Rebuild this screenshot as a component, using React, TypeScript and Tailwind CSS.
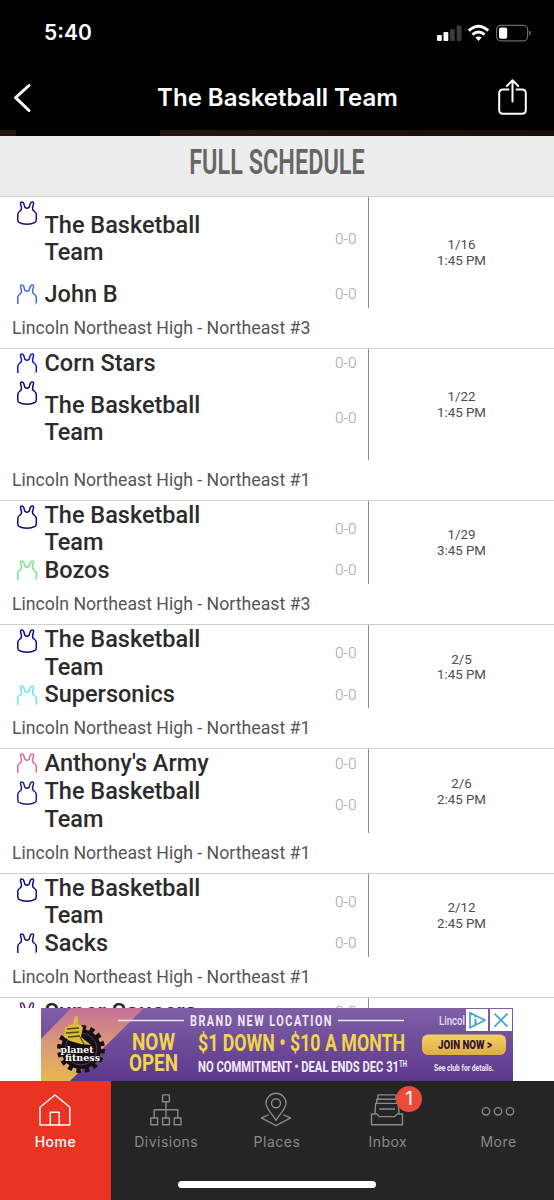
import type { ReactNode } from 'react';
import { clsx } from 'clsx';

interface Team {
  name: string;
  jersey: string;
  lines: number;
  wraps?: boolean;
}

interface Game {
  teams: Team[];
  date: string;
  time: string;
  venue: string;
}

const US = 'The Basketball Team';

const games: Game[] = [
  {
    teams: [
      { name: US, jersey: '#2a0a6e', lines: 3, wraps: true },
      { name: 'John B', jersey: '#4169d8', lines: 1 },
    ],
    date: '1/16',
    time: '1:45 PM',
    venue: 'Lincoln Northeast High - Northeast #3',
  },
  {
    teams: [
      { name: 'Corn Stars', jersey: '#1414d2', lines: 1 },
      { name: US, jersey: '#0a0a78', lines: 3, wraps: true },
    ],
    date: '1/22',
    time: '1:45 PM',
    venue: 'Lincoln Northeast High - Northeast #1',
  },
  {
    teams: [
      { name: US, jersey: '#0a0a86', lines: 2, wraps: true },
      { name: 'Bozos', jersey: '#74e884', lines: 1 },
    ],
    date: '1/29',
    time: '3:45 PM',
    venue: 'Lincoln Northeast High - Northeast #3',
  },
  {
    teams: [
      { name: US, jersey: '#0a0a86', lines: 2, wraps: true },
      { name: 'Supersonics', jersey: '#66e9ee', lines: 1 },
    ],
    date: '2/5',
    time: '1:45 PM',
    venue: 'Lincoln Northeast High - Northeast #1',
  },
  {
    teams: [
      { name: "Anthony's Army", jersey: '#e3668c', lines: 1 },
      { name: US, jersey: '#20208c', lines: 2, wraps: true },
    ],
    date: '2/6',
    time: '2:45 PM',
    venue: 'Lincoln Northeast High - Northeast #1',
  },
  {
    teams: [
      { name: US, jersey: '#0a0a78', lines: 2, wraps: true },
      { name: 'Sacks', jersey: '#14147a', lines: 1 },
    ],
    date: '2/12',
    time: '2:45 PM',
    venue: 'Lincoln Northeast High - Northeast #1',
  },
  {
    teams: [
      { name: 'Super Saucers', jersey: '#6b1a80', lines: 1 },
      { name: US, jersey: '#0a0a78', lines: 2, wraps: true },
    ],
    date: '2/19',
    time: '2:45 PM',
    venue: 'Lincoln Northeast High - Northeast #1',
  },
];

const LINE = 27.7;

function Jersey({ color, open }: { color: string; open: boolean }) {
  return (
    <svg width="24" height="28" viewBox="0 0 24 28" fill="none" stroke={color} strokeWidth="1.5" strokeLinejoin="round">
      {open ? (
        <>
          <path d="M2.8 24V17Q3 15.4 5 14Q6.9 12.8 6.5 10.5L5.4 6.4Q5.4 4.9 6.9 4.9Q8.2 4.9 8.7 6.6L10 10.4Q12 12 14 10.4L15.3 6.6Q16 4.9 17.2 4.9Q18.7 4.9 18.6 6.4L17.6 10.5Q17.1 12.8 19 14Q21 15.4 21.3 17V23.3" />
          <path d="M21.3 22.8Q20.8 24.3 19 24.9" strokeWidth="0.7" opacity="0.5" />
        </>
      ) : (
        <path d="M4 25.4Q2.8 24.6 2.8 22.5V17Q3 15.4 5 14Q6.9 12.8 6.5 10.5L5.4 6.4Q5.4 4.9 6.9 4.9Q8.2 4.9 8.7 6.6L10 10.4Q12 12 14 10.4L15.3 6.6Q16 4.9 17.2 4.9Q18.7 4.9 18.6 6.4L17.6 10.5Q17.1 12.8 19 14Q21 15.4 21.3 17V22.5Q21.2 24.6 20 25.4Q17 27.2 12 27.2Q7 27.2 4 25.4Z" />
      )}
    </svg>
  );
}

function GameRow({ game }: { game: Game }) {
  return (
    <div className="shrink-0 border-t border-[#cfcfcf] pb-[10.2px]">
      <div className="flex">
        <div className="w-[369px] border-r border-[#8c8c8c]">
          {game.teams.map((team) => (
            <div key={team.name} className="flex pl-[15px]" style={{ height: team.lines * LINE }}>
              <div className="w-[29.5px] shrink-0">
                <Jersey color={team.jersey} open={!team.wraps} />
              </div>
              <div className="flex w-[180px] items-center pt-[1.6px] text-[23.5px] leading-[27.5px] font-medium text-[#2c2c2c]">
                {team.name}
              </div>
              <div className="flex flex-1 items-center justify-end pt-[1.6px] pr-[11.5px] text-[15.4px] font-light text-[#a3a3a3]">0-0</div>
            </div>
          ))}
        </div>
        <div className="flex flex-1 flex-col items-center justify-center pt-px text-[13.3px] leading-[15.6px] text-[#4d4d4d]">
          <span>{game.date}</span>
          <span>{game.time}</span>
        </div>
      </div>
      <div className="pt-[10px] pl-3 text-[17.7px] leading-5 text-[#555]">{game.venue}</div>
    </div>
  );
}

function StatusBar() {
  return (
    <div className="flex h-[66px] items-center justify-between pr-[23px] pl-[44px]">
      <span className="text-[21px] font-semibold">5:40</span>
      <svg width="95" height="20" viewBox="0 0 95 20" fill="white">
        <rect x="1" y="12" width="4.8" height="6" rx="1" />
        <rect x="7.5" y="9" width="4.8" height="9" rx="1" />
        <rect x="14" y="6" width="4.8" height="12" rx="1" fill="#3a3a3a" />
        <rect x="20.7" y="2.5" width="4.8" height="15.5" rx="1" fill="#3a3a3a" />
        <g fill="none" stroke="white" strokeWidth="2.9">
          <path d="M32.8 7.6Q42.5 -1 52.2 7.6" />
          <path d="M36.4 11.7Q42.5 6.3 48.6 11.7" />
        </g>
        <path d="M39.3 14.6Q42.5 12.2 45.7 14.6L42.5 18Z" />
        <rect x="60.6" y="2.4" width="31" height="15.4" rx="4" fill="none" stroke="#6b6b6b" strokeWidth="1.2" />
        <rect x="63" y="4.6" width="8.2" height="11.2" rx="2" />
        <path d="M93.2 7.6Q95 8.4 95 10.1T93.2 12.6Z" fill="#6b6b6b" />
      </svg>
    </div>
  );
}

function NavBar() {
  return (
    <div className="grid h-16 grid-cols-[1fr_auto_1fr] items-center pr-[26px] pl-[12px]">
      <svg width="32" height="36" viewBox="0 0 32 36" fill="none" stroke="white" strokeWidth="3" strokeLinecap="round">
        <path d="M17 5.5L3.6 17.7L17 30.5" strokeLinejoin="round" />
      </svg>
      <h1 className="translate-x-[7.5px] text-[24px] font-semibold">The Basketball Team</h1>
      <svg className="justify-self-end" width="32" height="40" viewBox="0 0 32 40" fill="none" stroke="white" strokeWidth="2" strokeLinecap="round" strokeLinejoin="round">
        <path d="M12.5 11.5H7Q3.2 11.5 3.2 15.3V32Q3.2 35.8 7 35.8H26Q29.8 35.8 29.8 32V15.3Q29.8 11.5 26 11.5H20.5" />
        <path d="M16.5 23.5V2.5M10.8 8L16.5 2.3L22.2 8" />
      </svg>
    </div>
  );
}

function AdBanner() {
  return (
    <div className="flex h-[73px] shrink-0 justify-start bg-white pl-[41px]">
      <svg width="472" height="73" viewBox="0 0 472 73" className="font-['Roboto']">
        <defs>
          <linearGradient id="purple" x1="0" y1="0" x2="0" y2="1">
            <stop offset="0" stopColor="#7f60a6" />
            <stop offset="1" stopColor="#5d378c" />
          </linearGradient>
          <linearGradient id="sunset" x1="0" y1="0" x2="0" y2="1">
            <stop offset="0" stopColor="#c4719a" />
            <stop offset="0.5" stopColor="#dc9a76" />
            <stop offset="1" stopColor="#e6b750" />
          </linearGradient>
          <linearGradient id="gold" x1="0" y1="0" x2="0" y2="1">
            <stop offset="0" stopColor="#f3d163" />
            <stop offset="1" stopColor="#deae42" />
          </linearGradient>
        </defs>
        <rect width="472" height="73" fill="url(#purple)" />
        <path d="M30 0H103L29 73H0V31Z" fill="url(#sunset)" />
        {/* gear logo */}
        <circle cx="40" cy="41" r="20" fill="#15100f" />
        <circle cx="40" cy="41" r="21.5" fill="none" stroke="#15100f" strokeWidth="5" strokeDasharray="4.5 3.94" />
        <circle cx="40" cy="41" r="16" fill="none" stroke="#55357a" strokeWidth="1" />
        <path d="M34 8Q37 7 37 11L37 16L42 19L40 29L50 37L40 36L29 33L23 29L24 19L32 16Z" fill="#d9bd38" />
        <path d="M26 21L38 20M25 25L38 24M27 29L39 28M39 29L43 36" stroke="#54491d" strokeWidth="1.3" />
        <g fill="#fff" stroke="#15100f" strokeWidth="1.2" paintOrder="stroke" fontWeight="700" fontSize="9.5" className="font-['DejaVu_Serif']">
          <text x="19.5" y="44.5" textLength="33" lengthAdjust="spacingAndGlyphs">planet</text>
          <text x="24" y="52.5" textLength="35" lengthAdjust="spacingAndGlyphs">fitness</text>
        </g>
        <path d="M77 12.5H143M297 12.5H363" stroke="#efe6f5" strokeWidth="1.6" />
        <text x="149" y="18" fontSize="15" fontWeight="700" fill="#f1e9f6" letterSpacing="2" textLength="143" lengthAdjust="spacingAndGlyphs">BRAND NEW LOCATION</text>
        <g fill="#f1d64b" fontWeight="700">
          <text x="91" y="42.3" fontSize="24.5" textLength="43" lengthAdjust="spacingAndGlyphs">NOW</text>
          <text x="88" y="63.3" fontSize="24.5" textLength="49" lengthAdjust="spacingAndGlyphs">OPEN</text>
          <text x="157" y="43" fontSize="23" textLength="207" lengthAdjust="spacingAndGlyphs">$1 DOWN • $10 A MONTH</text>
        </g>
        <text x="157" y="63.6" fontSize="15.5" fontWeight="700" fill="#f4edf8" textLength="201" lengthAdjust="spacingAndGlyphs">NO COMMITMENT • DEAL ENDS DEC 31</text>
        <text x="358" y="58.5" fontSize="8.5" fontWeight="700" fill="#f4edf8" textLength="8" lengthAdjust="spacingAndGlyphs">TH</text>
        <text x="398" y="17" fontSize="12" fontWeight="500" fill="#eadff2" textLength="26" lengthAdjust="spacingAndGlyphs">Lincol</text>
        <rect x="381" y="26.5" width="84" height="20.5" rx="6" fill="url(#gold)" />
        <text x="397" y="41.3" fontSize="12.5" fontWeight="900" fill="#33162d" textLength="54" lengthAdjust="spacingAndGlyphs">JOIN NOW &gt;</text>
        <text x="393" y="62.5" fontSize="9.5" fontWeight="700" fill="#efe6f5" textLength="60" lengthAdjust="spacingAndGlyphs">See club for details.</text>
        <rect x="425" y="1" width="22" height="22" fill="#fff" />
        <rect x="449" y="1" width="22" height="22" fill="#fff" />
        <g fill="none" stroke="#3da6c8" strokeWidth="1.7">
          <path d="M429 4.7L444 12.3L429 19.8Z" strokeLinejoin="round" />
          <path d="M434.5 11V16.5M434.5 8V9.6" strokeWidth="2" />
          <path d="M453.5 5.7L466.5 18.7M466.5 5.7L453.5 18.7" />
        </g>
      </svg>
    </div>
  );
}

const tabs: { label: string; icon: ReactNode; badge?: number }[] = [
  {
    label: 'Home',
    icon: (
      <>
        <path d="M2 33V15.3L17 3L31.8 15.3V33Z" />
        <path d="M12.3 33V20.2H21.2V33" />
      </>
    ),
  },
  {
    label: 'Divisions',
    icon: (
      <>
        <path d="M13.6 2.9H20.4V9.7H13.6ZM17 9.7V26M5.2 26V17.8H28.8V26" />
        <path d="M1.8 26H8.6V32.8H1.8ZM13.6 26H20.4V32.8H13.6ZM25.2 26H32V32.8H25.2Z" />
      </>
    ),
  },
  {
    label: 'Places',
    icon: (
      <>
        <path d="M17 28.3C13.5 22 7 17 7 11.3A10 10 0 0 1 27 11.3C27 17 20.5 22 17 28.3Z" />
        <circle cx="17" cy="11.3" r="4.5" />
        <path d="M9.5 22.8L2.4 25.8L17 33.6L31.6 25.8L24.5 22.8" />
      </>
    ),
  },
  {
    label: 'Inbox',
    icon: (
      <>
        <path d="M1.5 32.7V22H6.8L9.3 24.6H24.7L27.2 22H32.5V32.7Z" />
        <path d="M5 22L5.6 11.4H28.4L29 22M6.7 11.4V7.2H27.3V11.4M8 7.2V2.9H26V7.2M9 17H25" />
      </>
    ),
    badge: 1,
  },
  {
    label: 'More',
    icon: (
      <>
        <circle cx="5" cy="19.3" r="3.7" />
        <circle cx="17" cy="19.3" r="3.7" />
        <circle cx="29" cy="19.3" r="3.7" />
      </>
    ),
  },
];

function TabBar() {
  return (
    <nav className="relative grid h-[119px] shrink-0 grid-cols-5 bg-[#252525] font-['Inter',sans-serif]">
      {tabs.map((tab, i) => (
        <div
          key={tab.label}
          className={clsx(
            'flex flex-col items-center pt-[11px]',
            i === 0 ? 'bg-[#e93323] font-medium text-white' : 'text-[#8a8a8a]',
          )}
        >
          <div className="relative -left-[0.6px]">
            <svg width="34" height="36" viewBox="0 0 34 36" fill="none" stroke="currentColor" strokeWidth="1.4" strokeLinejoin="round">
              {tab.icon}
            </svg>
            {tab.badge && (
              <span className="absolute -top-[6px] left-[26px] flex h-[26px] w-[26px] items-center justify-center rounded-full bg-[#ea4b3a] text-[19px] text-white">
                {tab.badge}
              </span>
            )}
          </div>
          <span className="mt-[4px] text-[14px] leading-5 tracking-[0.5px]">{tab.label}</span>
        </div>
      ))}
      <div className="absolute bottom-[12px] left-[178px] h-[7px] w-[198px] rounded-full bg-white" />
    </nav>
  );
}

export default function App() {
  return (
    <div className="flex h-[1200px] w-[554px] flex-col overflow-hidden bg-white font-['Roboto',sans-serif]">
      <header className="shrink-0 bg-black font-['Inter',sans-serif] text-white">
        <StatusBar />
        <NavBar />
        <div className="flex h-[6px]">
          <div className="w-4 bg-[#24130c]" />
          <div className="w-36 bg-[#050303]" />
          <div className="flex-1 bg-gradient-to-r from-[#28150d] to-[#180c08]" />
        </div>
      </header>
      <div className="flex h-[60px] shrink-0 justify-center bg-[#ededed] pt-[7px]">
        <h2 className="scale-x-[0.67] text-[35px] leading-10 font-semibold whitespace-nowrap text-[#666]">FULL SCHEDULE</h2>
      </div>
      <main className="flex min-h-0 flex-1 flex-col overflow-hidden">
        {games.map((game) => (
          <GameRow key={game.date} game={game} />
        ))}
      </main>
      <AdBanner />
      <TabBar />
    </div>
  );
}
